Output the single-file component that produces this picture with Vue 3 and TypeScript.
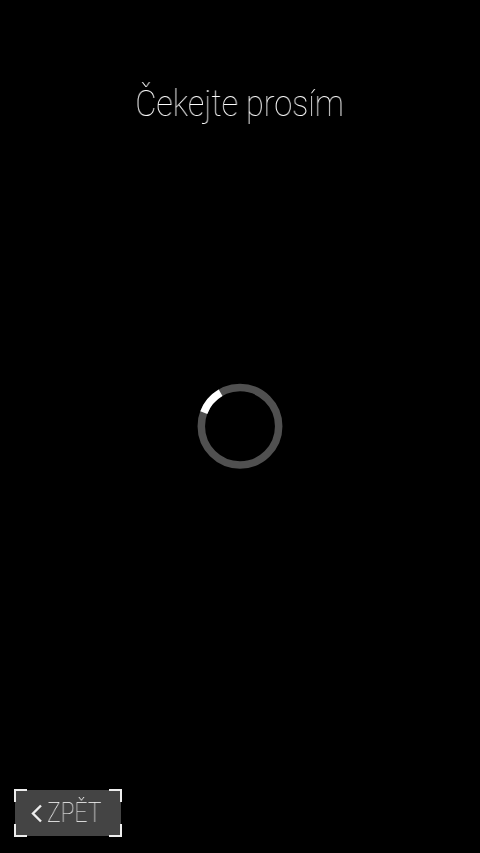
<script setup lang="ts">
const r = 38.7
const c = 2 * Math.PI * r
const arcLen = (39 / 360) * c
const dash = `${arcLen} ${c - arcLen}`
const offset = ((69.5 + 90) / 360) * c
</script>

<template>
  <main class="page">
    <h1 class="title"><span class="narrow">Čekejte prosím</span></h1>
    <div class="middle">
      <svg class="spinner" width="86" height="86" viewBox="0 0 86 86" role="img" aria-label="Načítání">
        <circle cx="43" cy="43.3" :r="r" fill="none" stroke="#505050" stroke-width="7.5" />
        <circle cx="43" cy="43.3" :r="r" fill="none" stroke="#fff" stroke-width="7.5"
          :stroke-dasharray="dash" :stroke-dashoffset="offset" />
      </svg>
    </div>
    <footer class="footer">
      <button class="back" type="button">
        <svg class="chev" width="12" height="20" viewBox="0 0 12 20">
          <path d="M10 2.5 2 10.5l8 8" fill="none" stroke="#eee" stroke-width="2.4" />
        </svg>
        <span class="label">ZPĚT</span>
        <i class="corner tl"></i><i class="corner tr"></i><i class="corner bl"></i><i class="corner br"></i>
      </button>
    </footer>
  </main>
</template>

<style>
html, body { margin: 0; background: #000; }
</style>

<style scoped>
.page {
  height: 853px;
  background: #000;
  color: #fff;
  display: flex;
  flex-direction: column;
  font-family: Roboto, "Noto Sans", sans-serif;
  overflow: hidden;
}
.title {
  margin: 0;
  padding-top: 82px;
  font-size: 37px;
  line-height: 44px;
  font-weight: 100;
  text-align: center;
}
.narrow {
  display: inline-block;
  transform: scaleX(0.88);
  transform-origin: center;
  will-change: transform;
}
.middle {
  flex: 1;
  display: flex;
  justify-content: center;
  padding-top: 257px;
}
.spinner { display: block; }
.footer {
  padding: 0 0 17px 15px;
}
.back {
  position: relative;
  width: 106px;
  height: 46px;
  padding: 0 0 0 16px;
  border: 0;
  background: #444;
  color: #fff;
  display: flex;
  align-items: center;
  gap: 4px;
  font-family: inherit;
  font-size: 28px;
  font-weight: 100;
}
.label {
  display: inline-block;
  transform: translateY(-1px) scaleX(0.82);
  transform-origin: left center;
  will-change: transform;
}
.corner {
  position: absolute;
  width: 11px;
  height: 11px;
  border: 0 solid #eee;
}
.tl { left: -1px; top: -1px; border-width: 2px 0 0 2px; }
.tr { right: -1px; top: -1px; border-width: 2px 2px 0 0; }
.bl { left: -1px; bottom: -1px; border-width: 0 0 2px 2px; }
.br { right: -1px; bottom: -1px; border-width: 0 2px 2px 0; }
</style>
